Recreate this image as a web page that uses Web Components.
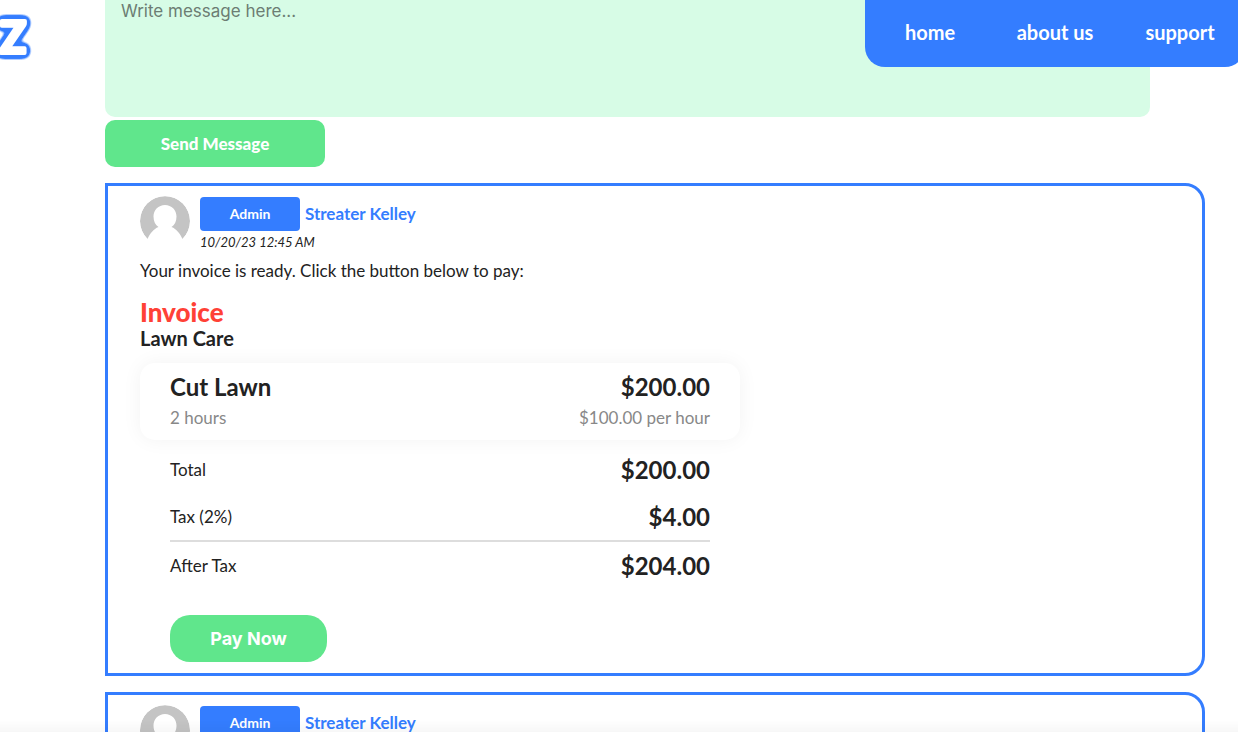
<!DOCTYPE html>
<html lang="en">
<head>
<meta charset="utf-8">
<title>Messages</title>
<style>
  html { overflow: hidden; }
  body {
    margin: 0;
    --blue: #347dff;
    --green: #60e68c;
    --mint: #d7fce6;
    --ink: #222;
    font-family: Lato, sans-serif;
    font-size: 17px;
    line-height: 24px;
    color: var(--ink);
    background: #fff;
  }
</style>
</head>
<body>
<message-page></message-page>
<script>
class BaseElement extends HTMLElement {
  constructor() {
    super();
    this.attachShadow({ mode: "open" }).innerHTML = this.constructor.markup;
  }
}

customElements.define("brand-logo", class extends BaseElement {
  static markup = `
    <style>
      :host { display: block; width: 40px; height: 60px; }
      svg { display: block; overflow: visible; }
      text { font: 700 43px Lato, sans-serif; fill: #fff; stroke: #fff; stroke-width: 4px; stroke-linejoin: round; }
      feFlood { flood-color: var(--blue); }
    </style>
    <svg width="40" height="60">
      <!-- Rounded blue rim around the white letter -->
      <filter id="rim" filterUnits="userSpaceOnUse" x="-20" y="-10" width="80" height="80" color-interpolation-filters="sRGB">
        <feGaussianBlur in="SourceAlpha" stdDeviation="3"/>
        <feComponentTransfer result="grown"><feFuncA type="linear" slope="10" intercept="-0.4"/></feComponentTransfer>
        <feFlood/>
        <feComposite in2="grown" operator="in" result="edge"/>
        <feMerge><feMergeNode in="edge"/><feMergeNode in="SourceGraphic"/></feMerge>
      </filter>
      <text x="26" y="43" text-anchor="end" filter="url(#rim)">Z</text>
    </svg>`;
});

customElements.define("site-nav", class extends BaseElement {
  static markup = `
    <style>
      :host { display: block; box-sizing: border-box; width: 380px; height: 67px; background: var(--blue); border-radius: 0 0 20px 20px; }
      nav { display: grid; grid-template-columns: repeat(3, 125px); justify-content: center; align-items: center; height: 64px; }
      a { color: #fff; text-decoration: none; text-align: center; font-size: 20px; font-weight: 700; }
    </style>
    <nav><a href="#home">home</a><a href="#about">about us</a><a href="#support">support</a></nav>`;
});

customElements.define("message-form", class extends BaseElement {
  static markup = `
    <style>
      :host { display: block; }
      form { display: flex; flex-direction: column; align-items: flex-start; gap: 3px; }
      textarea { box-sizing: border-box; width: 95%; height: 117px; padding: 1px 16px; border: 0; border-radius: 0 0 10px 10px; background: var(--mint); resize: none; font: 17px/20px Inter, sans-serif; color: var(--ink); }
      textarea::placeholder { color: #6c7d73; opacity: 1; }
      button { width: 20%; height: 47px; padding: 0; border: 0; border-radius: 10px; background: var(--green); color: #fff; font: 900 17px/24px Lato, sans-serif; }
    </style>
    <form>
      <textarea placeholder="Write message here..." aria-label="Message"></textarea>
      <button type="button">Send Message</button>
    </form>`;
});

customElements.define("user-avatar", class extends BaseElement {
  static markup = `
    <style>
      :host { display: block; width: 50px; height: 50px; }
      svg { display: block; border-radius: 50%; }
    </style>
    <svg width="50" height="50" viewBox="0 0 50 50" role="img" aria-label="Profile picture">
      <path d="M7.500 43A25 25 0 1 1 42.500 43C40 37.500 36.500 33 31.500 31c3-2 5-5.500 5-10.500C36.500 14 31.500 9 25 9s-11.500 5-11.500 11.500c0 5 2 8.500 5 10.500C13.500 33 10 37.500 7.500 43Z" fill="#c4c4c4"/>
    </svg>`;
});

customElements.define("message-card", class extends BaseElement {
  static markup = `
    <style>
      :host { display: block; box-sizing: border-box; border: 3px solid var(--blue); border-radius: 0 20px 20px 0; padding: 10px 32px 11px; }
      header { display: flex; gap: 10px; }
      .who { display: flex; align-items: center; gap: 5px; height: 36px; }
      .badge { display: flex; align-items: center; justify-content: center; width: 100px; height: 34px; border-radius: 4px; background: var(--blue); color: #fff; font-size: 14px; font-weight: 700; }
      .name { color: var(--blue); font-weight: 700; }
      .date { display: block; font-size: 13px; line-height: 20px; font-style: italic; }
    </style>
    <header>
      <user-avatar></user-avatar>
      <div>
        <div class="who"><span class="badge"><slot name="role"></slot></span><span class="name"><slot name="name"></slot></span></div>
        <span class="date"><slot name="date"></slot></span>
      </div>
    </header>
    <slot></slot>`;
});

customElements.define("invoice-item", class extends BaseElement {
  static markup = `
    <style>
      :host { display: block; padding: 8px 30px 7px; border-radius: 15px; background: #fff; box-shadow: 0 0 20px rgba(0, 0, 0, .05); }
      div { display: flex; justify-content: space-between; }
      .main { font-size: 24px; line-height: 32px; font-weight: 700; }
      .detail { line-height: 30px; color: #888; }
    </style>
    <div class="main"><slot name="title"></slot><slot name="price"></slot></div>
    <div class="detail"><slot name="quantity"></slot><slot name="rate"></slot></div>`;
});

customElements.define("invoice-sheet", class extends BaseElement {
  static markup = `
    <style>
      :host { display: block; max-width: 600px; }
      p { margin: 3px 0 11px; line-height: 32px; }
      h2 { margin: 0; font-size: 26px; line-height: 28px; font-weight: 900; color: #ff4136; }
      h3 { margin: 0 0 13px; font-size: 20px; line-height: 24px; font-weight: 700; }
      .totals { padding: 6px 30px 0; }
      table { width: 100%; border-collapse: collapse; }
      th, td { padding: 0; height: 47px; }
      th { text-align: left; font-weight: 400; }
      td { text-align: right; font-size: 24px; font-weight: 700; }
      tfoot { border-top: 2px solid #ddd; }
      button { width: 157px; height: 47px; margin-top: 26px; padding: 0; border: 0; border-radius: 20px; background: var(--green); color: #fff; font: 700 18px/24px Inter, sans-serif; display: block; }
    </style>
    <p>Your invoice is ready. Click the button below to pay:</p>
    <h2>Invoice</h2>
    <h3>Lawn Care</h3>
    <invoice-item>
      <span slot="title">Cut Lawn</span><span slot="price">$200.00</span>
      <span slot="quantity">2 hours</span><span slot="rate">$100.00 per hour</span>
    </invoice-item>
    <div class="totals">
      <table>
        <tbody>
          <tr><th scope="row">Total</th><td>$200.00</td></tr>
          <tr><th scope="row">Tax (2%)</th><td>$4.00</td></tr>
        </tbody>
        <tfoot><tr><th scope="row">After Tax</th><td>$204.00</td></tr></tfoot>
      </table>
      <button type="button">Pay Now</button>
    </div>`;
});

customElements.define("message-page", class extends BaseElement {
  static markup = `
    <style>
      :host { display: block; height: 100vh; overflow: hidden; }
      main { display: flex; flex-direction: column; gap: 16px; margin: 0 33px 0 105px; }
      brand-logo { position: fixed; left: 0; top: 10px; }
      site-nav { position: fixed; right: -7px; top: 0; }
      .fade { position: fixed; left: 0; right: 0; bottom: 0; height: 12px; background: linear-gradient(transparent, rgba(0, 0, 0, .03)); pointer-events: none; }
    </style>
    <brand-logo></brand-logo>
    <main>
      <message-form></message-form>
      <message-card>
        <span slot="role">Admin</span><span slot="name">Streater Kelley</span><span slot="date">10/20/23 12:45 AM</span>
        <invoice-sheet></invoice-sheet>
      </message-card>
      <message-card>
        <span slot="role">Admin</span><span slot="name">Streater Kelley</span>
      </message-card>
    </main>
    <site-nav></site-nav>
    <div class="fade"></div>`;
});
</script>
</body>
</html>
